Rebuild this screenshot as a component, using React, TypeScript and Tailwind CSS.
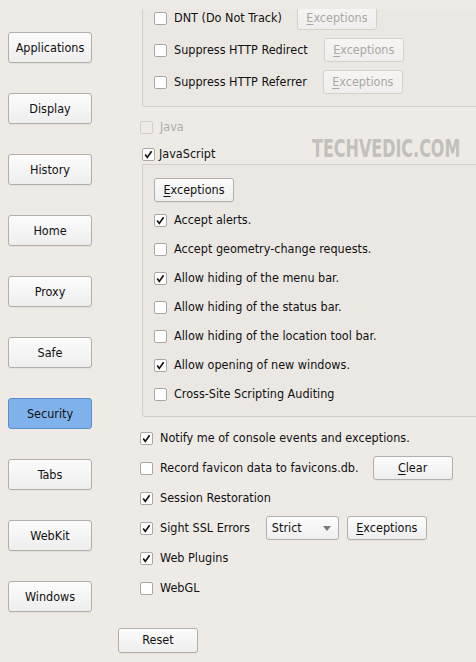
import type { ReactNode } from "react";

const font = "font-['DejaVu_Sans_Condensed','DejaVu_Sans',sans-serif]";

const sideItems = [
  "Applications",
  "Display",
  "History",
  "Home",
  "Proxy",
  "Safe",
  "Security",
  "Tabs",
  "WebKit",
  "Windows",
];

const jsItems = [
  { label: "Accept alerts.", checked: true },
  { label: "Accept geometry-change requests.", checked: false },
  { label: "Allow hiding of the menu bar.", checked: true },
  { label: "Allow hiding of the status bar.", checked: false },
  { label: "Allow hiding of the location tool bar.", checked: false },
  { label: "Allow opening of new windows.", checked: true },
  { label: "Cross-Site Scripting Auditing", checked: false },
];

const Check = ({
  checked = false,
  disabled = false,
}: {
  checked?: boolean;
  disabled?: boolean;
}) => (
  <span
    className={[
      "flex h-[13px] w-[13px] shrink-0 items-center justify-center rounded-[2px] border",
      disabled ? "border-[#d2cec9] bg-transparent" : "border-[#aba7a3] bg-white",
    ].join(" ")}
  >
    {checked && (
      <svg viewBox="0 0 11 11" className="h-[11px] w-[11px]">
        <path
          d="M2.2 5.6 L4.3 8.4 L8.6 2.3"
          fill="none"
          stroke="#111"
          strokeWidth="1.7"
        />
      </svg>
    )}
  </span>
);

const Button = ({
  children,
  className = "",
  disabled = false,
  active = false,
}: {
  children: ReactNode;
  className?: string;
  disabled?: boolean;
  active?: boolean;
}) => (
  <div
    className={[
      "flex shrink-0 items-center justify-center rounded-[3px] border",
      active
        ? "border-[#5b8fcc] bg-[#7fb1ea] text-[#111]"
        : disabled
          ? "border-[#d4d0cc] bg-gradient-to-b from-[#f6f5f4] to-[#f0eeec] text-[#aaa7a4]"
          : "border-[#b2aeaa] bg-gradient-to-b from-[#fcfcfc] to-[#eeeeee] text-[#111] shadow-[0_1px_0_rgba(0,0,0,0.04)]",
      className,
    ].join(" ")}
  >
    {children}
  </div>
);

const Exceptions = ({ disabled = false, className = "" }) => (
  <Button disabled={disabled} className={`h-[24px] w-[80px] ${className}`}>
    <span>
      <span className="underline underline-offset-2">E</span>xceptions
    </span>
  </Button>
);

const Row = ({
  label,
  checked = false,
  disabled = false,
  className = "",
  gap = "gap-[7px]",
  children,
}: {
  label: string;
  checked?: boolean;
  disabled?: boolean;
  className?: string;
  gap?: string;
  children?: ReactNode;
}) => (
  <div className={`flex items-center ${className}`}>
    <div className={`flex items-center ${gap}`}>
      <Check checked={checked} disabled={disabled} />
      <span className={disabled ? "text-[#b0ada9]" : "text-[#111]"}>
        {label}
      </span>
    </div>
    {children}
  </div>
);

export default function App() {
  return (
    <div
      className={`relative flex h-[662px] w-[476px] overflow-hidden bg-[#eeebe7] text-[12.5px] ${font}`}
    >
      <div className="flex w-[118px] shrink-0 flex-col gap-[30px] pl-[8px] pt-[32px]">
        {sideItems.map((item) => (
          <Button
            key={item}
            active={item === "Security"}
            className="h-[31px] w-[84px] pt-[2px]"
          >
            {item}
          </Button>
        ))}
      </div>

      <div className="flex min-w-0 flex-1 flex-col">
        <div className="mt-[9px] h-[609px] overflow-hidden">
          <div className="-mt-[15px] flex flex-col">
            <div className="ml-[24px] rounded-bl-[3px] border-b border-l border-t border-[#d3cfca] bg-[#ebe8e4] pb-[12px] pl-[11px] pt-[11px]">
              <div className="flex flex-col gap-[8px]">
                <Row label="DNT (Do Not Track)" className="h-[24px]">
                  <Exceptions disabled className="ml-[15px]" />
                </Row>
                <Row label="Suppress HTTP Redirect" className="h-[24px]">
                  <Exceptions disabled className="ml-[16px]" />
                </Row>
                <Row label="Suppress HTTP Referrer" className="h-[24px]">
                  <Exceptions disabled className="ml-[16px]" />
                </Row>
              </div>
            </div>

            <Row
              label="Java"
              disabled
              className="ml-[22px] mt-[10px] h-[20px]"
            />
            <Row
              label="JavaScript"
              checked
              gap="gap-[4px]"
              className="ml-[24px] mt-[7px] h-[20px]"
            />

            <div className="ml-[24px] rounded-bl-[3px] border-b border-l border-t border-[#d3cfca] bg-[#ebe8e4] pb-[7px] pl-[11px] pt-[13px]">
              <Exceptions className="h-[24px] w-[80px]" />
              <div className="mt-[4px] flex flex-col">
                {jsItems.map((item) => (
                  <Row
                    key={item.label}
                    label={item.label}
                    checked={item.checked}
                    className="h-[29px]"
                  />
                ))}
              </div>
            </div>

            <div className="ml-[22px] mt-[6px] flex flex-col">
              <Row
                label="Notify me of console events and exceptions."
                checked
                className="h-[30px]"
              />
              <Row
                label="Record favicon data to favicons.db."
                className="h-[30px]"
              >
                <Button className="ml-[14px] h-[24px] w-[80px]">
                  <span>
                    <span className="underline underline-offset-2">C</span>lear
                  </span>
                </Button>
              </Row>
              <Row label="Session Restoration" checked className="h-[30px]" />
              <Row label="Sight SSL Errors" checked className="h-[30px]">
                <div className="ml-[16px] flex h-[24px] w-[73px] items-center justify-between rounded-[3px] border border-[#b2aeaa] bg-gradient-to-b from-[#fcfcfc] to-[#efefef] pl-[5px] pr-[7px] text-[#111]">
                  <span>Strict</span>
                  <svg viewBox="0 0 8 5" className="h-[5px] w-[8px]">
                    <path d="M0 0 H8 L4 5 Z" fill="#7a7a7a" />
                  </svg>
                </div>
                <Exceptions className="ml-[8px]" />
              </Row>
              <Row label="Web Plugins" checked className="h-[30px]" />
              <Row label="WebGL" className="h-[30px]" />
            </div>
          </div>
        </div>

        <Button className="mt-[10px] h-[25px] w-[80px]">Reset</Button>
      </div>

      <span className="pointer-events-none absolute left-[312px] top-[134px] block origin-left scale-x-[0.71] whitespace-nowrap font-['DejaVu_Sans_Condensed','DejaVu_Sans',sans-serif] text-[25px] font-bold leading-[30px] text-[#c3bfba]">
        TECHVEDIC.COM
      </span>
    </div>
  );
}
